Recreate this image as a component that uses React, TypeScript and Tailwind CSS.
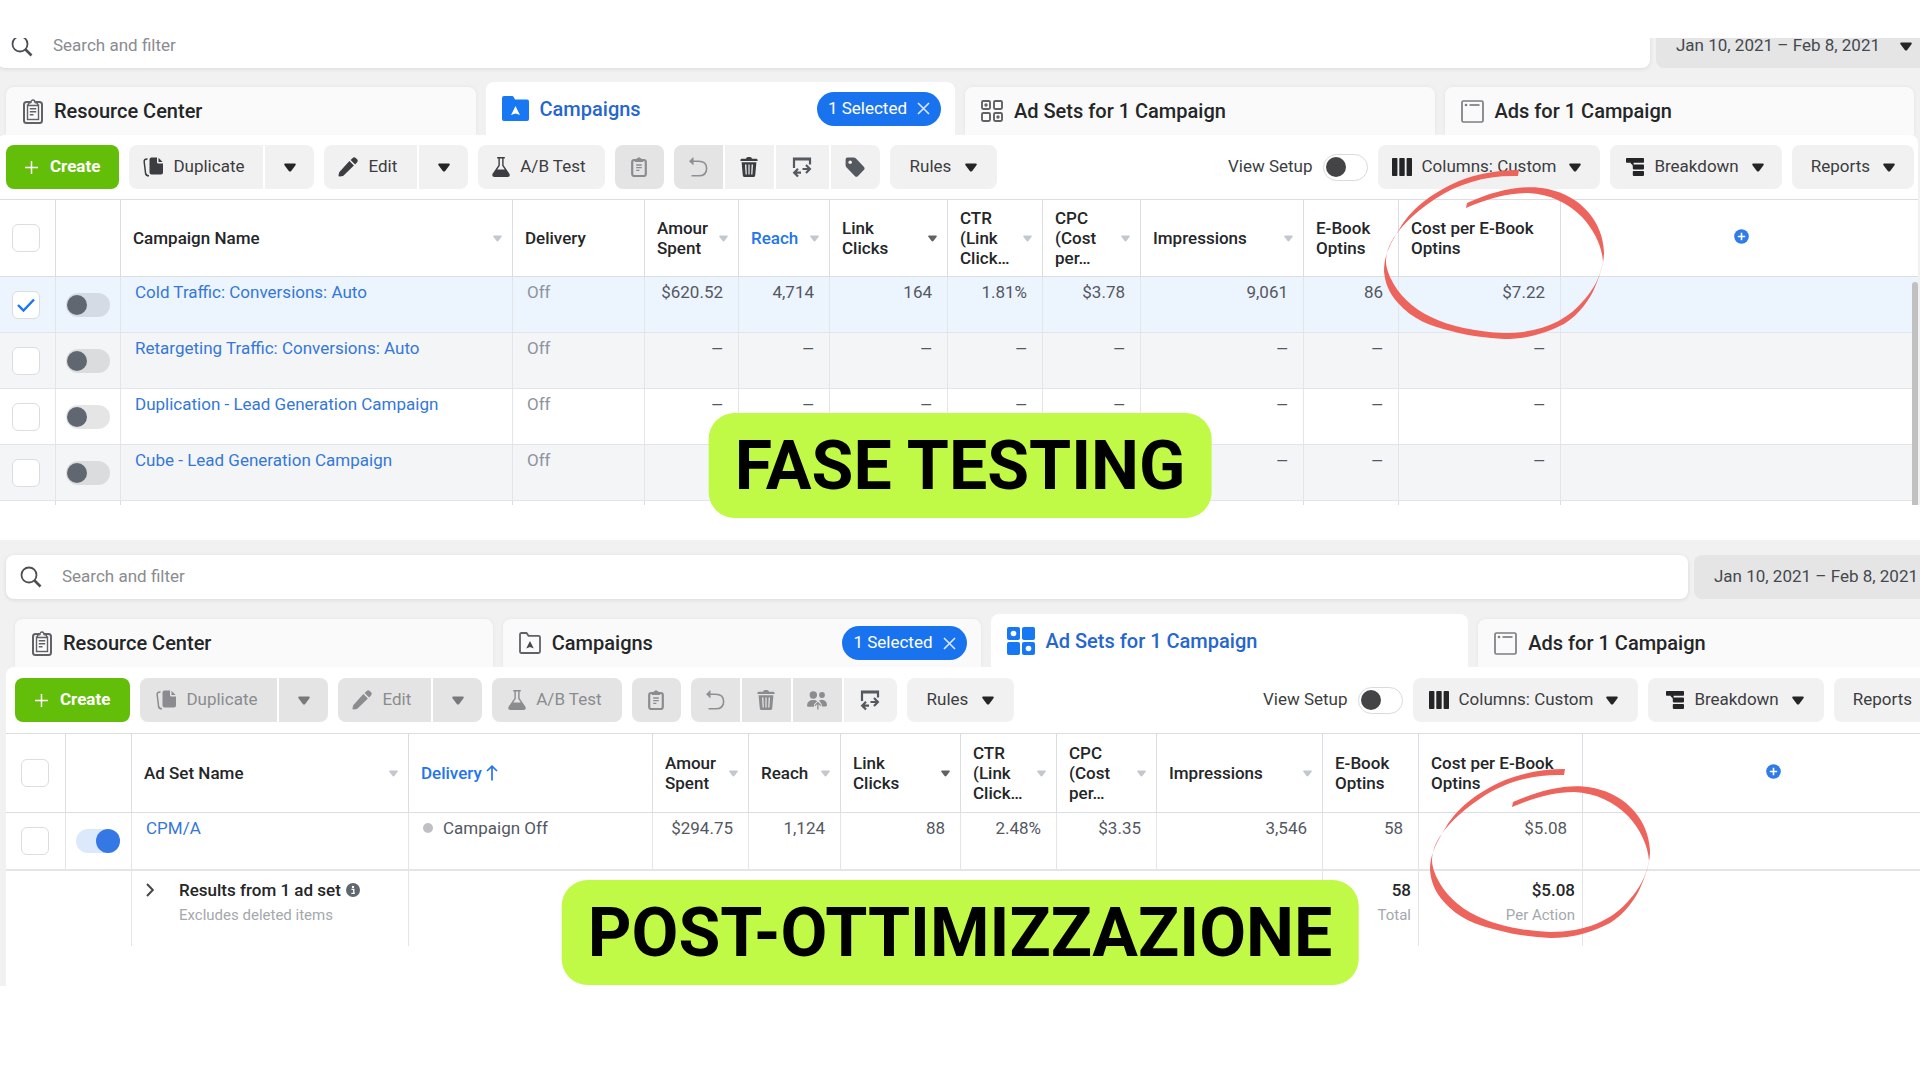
import { clsx } from "clsx";
import type { ReactNode } from "react";

type IconProps = { className?: string };

/* ---------- Icons ---------- */

const SearchIcon = () => (
  <svg viewBox="0 0 22 22" className="w-[22px] h-[22px] shrink-0" fill="none" stroke="#4b4f56" strokeWidth="1.8">
    <circle cx="9" cy="9" r="7.5" />
    <path d="M14.5 14.5 L20.5 20.5" strokeWidth="2.6" />
  </svg>
);

const Caret = ({ className }: IconProps) => (
  <svg viewBox="0 0 12 9" className={clsx("shrink-0", className)} fill="currentColor">
    <path d="M1.2 0.5 H10.8 Q12.3 0.8 11.5 2.3 L7.2 7.9 Q6 9.2 4.8 7.9 L0.5 2.3 Q-0.3 0.8 1.2 0.5 Z" />
  </svg>
);

const ClipboardIcon = () => (
  <svg viewBox="0 0 20 25" className="w-5 h-[25px] ml-px shrink-0" fill="none" stroke="#606266">
    <rect x="1" y="3" width="18" height="21" rx="2.5" strokeWidth="2" />
    <rect x="4.5" y="6" width="11" height="14.5" strokeWidth="1.4" />
    <path d="M5.5 6.5 V4.5 L8 3.5 Q8 1 10 1 Q12 1 12 3.5 L14.5 4.5 V6.5 Z" strokeWidth="1.3" fill="#f6f6f6" />
    <path d="M6.8 9.8 H13.2 M6.8 12.8 H13.2 M6.8 15.8 H10.5" strokeWidth="1.4" />
  </svg>
);

const PasteIcon = () => (
  <svg viewBox="0 0 16 20" className="w-4 h-5" fill="none" stroke="currentColor">
    <rect x="1.2" y="3" width="13.6" height="16" rx="2" strokeWidth="2.2" />
    <path d="M4 4.5 V3 L6 2 Q8 -0.6 10 2 L12 3 V4.5 Z" fill="currentColor" strokeWidth="1" />
    <path d="M5.2 8 H10.8 M5.2 10.7 H10.8 M5.2 13.4 H8.4" strokeWidth="1.3" />
  </svg>
);

const FolderIcon = ({ active }: { active?: boolean }) =>
  active ? (
    <svg viewBox="0 0 27 25" className="w-[27px] h-[25px] shrink-0">
      <path d="M2 0 H10 Q11.2 0 11.8 1.2 L13 3.4 H25 Q27 3.4 27 5.4 V23 Q27 25 25 25 H2 Q0 25 0 23 V2 Q0 0 2 0 Z" fill="#1877f2" />
      <path d="M13.5 10 L18 19 L13.5 17.4 L9 19 Z" fill="#fff" />
    </svg>
  ) : (
    <svg viewBox="0 0 22 22" className="w-[22px] h-[22px] shrink-0" fill="none" stroke="#606266" strokeWidth="1.8">
      <path d="M2.5 1 H7.5 L9.5 3.8 H19.5 Q21 3.8 21 5.3 V19.5 Q21 21 19.5 21 H2.5 Q1 21 1 19.5 V2.5 Q1 1 2.5 1 Z" />
      <path d="M11 9 L14.8 16.5 L11 15 L7.2 16.5 Z" fill="#444950" stroke="none" />
    </svg>
  );

const GridIcon = ({ active }: { active?: boolean }) =>
  active ? (
    <svg viewBox="0 0 28 28" className="w-[28px] h-[28px] shrink-0" fill="#1877f2">
      <rect x="0" y="0" width="13" height="13" rx="2" />
      <rect x="15" y="0" width="13" height="13" rx="2" />
      <rect x="0" y="15" width="13" height="13" rx="2" />
      <rect x="15" y="15" width="13" height="13" rx="2" />
      <circle cx="6.5" cy="6.5" r="2.8" fill="#fff" />
      <circle cx="21.5" cy="21.5" r="2.8" fill="#fff" />
    </svg>
  ) : (
    <svg viewBox="0 0 22 22" className="w-[22px] h-[22px] shrink-0" fill="none" stroke="#606266" strokeWidth="1.9">
      <rect x="1" y="1" width="8" height="8" rx="1.2" />
      <rect x="13" y="1" width="8" height="8" rx="1.2" />
      <rect x="1" y="13" width="8" height="8" rx="1.2" />
      <rect x="13" y="13" width="8" height="8" rx="1.2" />
      <circle cx="5" cy="5" r="1.7" fill="#606266" stroke="none" />
      <circle cx="17" cy="17" r="1.7" fill="#606266" stroke="none" />
    </svg>
  );

const WindowIcon = () => (
  <svg viewBox="0 0 23 23" className="w-[23px] h-[23px] shrink-0" fill="none" stroke="#7b7d80" strokeWidth="1.7">
    <rect x="1" y="1" width="21" height="21" rx="1.5" />
    <path d="M8.5 5 H18.5" />
    <circle cx="5" cy="5" r="1.3" fill="#7b7d80" stroke="none" />
  </svg>
);

const PlusIcon = () => (
  <svg viewBox="0 0 13 13" className="w-[13px] h-[13px]" stroke="#fff" strokeWidth="1.5">
    <path d="M6.5 0 V13 M0 6.5 H13" />
  </svg>
);

const DuplicateIcon = () => (
  <svg viewBox="0 0 20 20" className="w-5 h-5" fill="currentColor">
    <path d="M8.5 0.5 H14 V5 Q14 6.5 15.5 6.5 H20 V15.5 Q20 17.5 18 17.5 H8.5 Q6.5 17.5 6.5 15.5 V2.5 Q6.5 0.5 8.5 0.5 Z" />
    <path d="M15.5 0.8 L19.6 5 H15.5 Z" />
    <path d="M4.5 2 Q0.8 1.8 1.2 5 L2.6 16.5 Q3 18.8 6 18.8" fill="none" stroke="currentColor" strokeWidth="1.5" />
  </svg>
);

const PencilIcon = () => (
  <svg viewBox="0 0 20 20" className="w-5 h-5" fill="currentColor">
    <path d="M1.2 15.2 L11.4 4.1 L15.9 8.6 L5.1 19 L1.6 19.6 Q0.2 19.6 0.5 18.3 Z" />
    <path d="M12.6 2.9 L14.7 0.9 Q16.2 -0.3 17.7 0.9 L19.1 2.3 Q20.4 3.8 19.1 5.3 L17.1 7.4 Z" />
  </svg>
);

const FlaskIcon = () => (
  <svg viewBox="0 0 18 20" className="w-[18px] h-5" fill="currentColor">
    <path d="M5.2 0 H12.8 V1.6 H11.6 V8.3 L17.4 16.8 Q18.6 19.8 15.6 20 H2.4 Q-0.6 19.8 0.6 16.8 L6.4 8.3 V1.6 H5.2 Z M7.8 1.6 V8.8 L5.2 12.6 H12.8 L10.2 8.8 V1.6 Z" fillRule="evenodd" />
  </svg>
);

const UndoIcon = () => (
  <svg viewBox="0 0 20 20" className="w-5 h-5" fill="none" stroke="#8d8f92" strokeWidth="1.6">
    <path d="M2 4.2 H10.5 Q18.6 4.2 18.6 11.4 Q18.6 18.8 10.5 18.8 H3.5" />
    <path d="M5.2 0.6 L1.4 4.2 L5.2 7.8 Z" fill="#8d8f92" strokeWidth="0.6" />
  </svg>
);

const TrashIcon = () => (
  <svg viewBox="0 0 18 20" className="w-[18px] h-5" fill="currentColor">
    <path d="M6 1.8 Q6.3 0 8 0 H10 Q11.7 0 12 1.8 H16.5 Q17.6 2 17.6 3.2 V4 H0.4 V3.2 Q0.4 2 1.5 1.8 Z" />
    <path d="M1.6 5.2 H16.4 L15.2 18.4 Q15 20 13.4 20 H4.6 Q3 20 2.8 18.4 Z M5 7.6 L5.6 17.6 H6.8 L6.4 7.6 Z M8.4 7.6 V17.6 H9.6 V7.6 Z M11.6 7.6 L11.2 17.6 H12.4 L13 7.6 Z" fillRule="evenodd" />
  </svg>
);

const PeopleIcon = () => (
  <svg viewBox="0 0 20 20" className="w-5 h-5" fill="currentColor">
    <circle cx="6.3" cy="5" r="3.7" />
    <circle cx="15" cy="5" r="2.9" />
    <path d="M0 15.5 Q0.4 10 6.3 10 Q9 10 10.2 11.2 L7 14.2 V16.8 H0.8 Q0 16.6 0 15.5 Z" />
    <path d="M12 10.6 Q13.4 9.8 15 9.8 Q19.6 10 20 15 Q20 16.4 18.8 16.6 H15 L14.8 14.4 Z" />
    <path d="M7.9 15.6 L10.9 12.6 L13.9 15.6 M10.9 13 V19.5" fill="none" stroke="currentColor" strokeWidth="1.3" />
  </svg>
);

const SwapIcon = () => (
  <svg viewBox="0 0 20 21" className="w-5 h-[21px]" fill="none" stroke="#54585f" strokeWidth="2.2">
    <path d="M2 11 V1.6 H18 V7.5" />
    <path d="M1 2.8 H19" strokeWidth="1.4" />
    <path d="M2.5 15.7 H9 M6 11.8 L2.2 15.7 L6 19.6 M10.5 12 H17.5 M14 8 L17.9 12 L14 16" strokeWidth="2.2" />
  </svg>
);

const TagIcon = () => (
  <svg viewBox="0 0 20 20" className="w-5 h-5">
    <path d="M2.5 0.5 H8.5 Q10 0.5 11 1.6 L19 10 Q20.2 11.4 19 12.8 L12.8 19.2 Q11.4 20.4 10 19.2 L1.6 10.6 Q0.6 9.6 0.6 8.2 V2.4 Q0.6 0.6 2.5 0.5 Z" fill="#54585f" />
    <circle cx="5.2" cy="5.2" r="1.8" fill="#f0f0f0" />
  </svg>
);

const ColumnsIcon = () => (
  <svg viewBox="0 0 20 18" className="w-5 h-[18px]" fill="#242526">
    <rect x="0" y="0" width="5.4" height="18" rx="0.8" />
    <rect x="7.3" y="0" width="5.4" height="18" rx="0.8" />
    <rect x="14.6" y="0" width="5.4" height="18" rx="0.8" />
  </svg>
);

const BreakdownIcon = () => (
  <svg viewBox="0 0 18 18" className="w-[18px] h-[18px]" fill="#242526">
    <rect x="0" y="0" width="18" height="4.8" rx="0.8" />
    <rect x="6.8" y="6.4" width="11.2" height="5" rx="0.8" />
    <rect x="6.8" y="12.9" width="11.2" height="5" rx="0.8" />
    <path d="M4.8 4 H7.6 V8 L4.8 5.6 Z" />
  </svg>
);

const AddColumnIcon = () => (
  <svg viewBox="0 0 15 15" className="w-[15px] h-[15px]">
    <circle cx="7.5" cy="7.5" r="7.3" fill="#2f7be8" />
    <path d="M7.5 3.8 V11.2 M3.8 7.5 H11.2" stroke="#fff" strokeWidth="1.6" />
  </svg>
);

const InfoIcon = () => (
  <svg viewBox="0 0 14 14" className="w-[14px] h-[14px]">
    <circle cx="7" cy="7" r="7" fill="#606770" />
    <circle cx="7" cy="3.9" r="1.2" fill="#fff" />
    <path d="M5.5 6.3 H7.8 V10.2 M5.4 10.4 H8.8" stroke="#fff" strokeWidth="1.3" fill="none" />
  </svg>
);

const HandCircle = ({ className }: IconProps) => (
  <svg viewBox="0 0 220 170" className={clsx("absolute w-[220px] h-[170px] pointer-events-none", className)} fill="#ed645d">
    <path d="M135 0 C112 0 93 4 75 11 C45 24 26 41 16 58 C4 77 0 88 0 101 C1 113 5 123 14 133 C28 149 46 156 67 161 C85 166 103 168 120 169 C144 169 162 163 180 154 C196 144 206 129 211 117 C217 103 220 92 220 82 C219 66 214 54 205 43 C194 30 181 23 164 19 C140 14 112 20 83 33 L82 38 C103 29 124 23 144 23 C166 24 184 33 198 47 C210 60 218 76 219 92 C216 108 209 120 200 130 C182 152 155 163 120 163 C92 162 65 156 47 147 C28 138 14 124 7 109 C2 98 1 92 3 83 C8 63 30 43 51 29 C75 13 103 5 134 6 Z" />
  </svg>
);

/* ---------- Controls ---------- */

type BtnProps = {
  children: ReactNode;
  label?: string;
  disabled?: boolean;
  className?: string;
};

const Btn = ({ children, label, disabled, className }: BtnProps) => (
  <button
    aria-label={label}
    disabled={disabled}
    className={clsx(
      "h-11 flex items-center justify-center gap-2.5 whitespace-nowrap shrink-0",
      disabled ? "bg-[#e4e4e4] text-[#8a8c8f]" : "bg-[#f1f1f1] text-[#3b3d40]",
      className
    )}
  >
    {children}
  </button>
);

const CheckBox = ({ label, checked }: { label: string; checked?: boolean }) => (
  <span className="relative inline-block align-middle w-7 h-7">
    <input
      type="checkbox"
      aria-label={label}
      defaultChecked={checked}
      className="peer appearance-none block w-7 h-7 rounded-md border border-[#dadde1] bg-white"
    />
    <svg viewBox="0 0 28 28" className="absolute inset-0 w-7 h-7 hidden peer-checked:block pointer-events-none" fill="none" stroke="#1877f2" strokeWidth="2.4">
      <path d="M6 14 L11.5 19.5 L22 8.5" />
    </svg>
  </span>
);

const Toggle = ({ label, checked }: { label: string; checked?: boolean }) => (
  <input
    type="checkbox"
    role="switch"
    aria-label={label}
    defaultChecked={checked}
    className="appearance-none inline-flex items-center align-middle w-11 h-6 rounded-full bg-black/10 before:content-[''] before:w-5 before:h-5 before:ml-px before:rounded-full before:bg-[#606770] checked:bg-[#dce9fc] checked:before:w-6 checked:before:h-6 checked:before:ml-auto checked:before:bg-[#3578e5]"
  />
);

/* ---------- Panel sections ---------- */

type TabData = { id: string; title: string; icon: ReactNode; active?: boolean; selected?: boolean };

const Tab = ({ title, icon, active, selected }: TabData) => (
  <div
    className={clsx(
      "flex-1 flex items-center justify-between pl-4 pr-3.5 rounded-t-lg",
      active ? "h-[53px] bg-white" : "h-12 bg-[#fafafa] shadow-[0_0_4px_rgba(0,0,0,0.06)]"
    )}
  >
    <a
      href="#"
      className={clsx("flex items-center gap-[11px] text-[20px] font-medium whitespace-nowrap", active ? "text-[#2566d0]" : "text-[#242628]")}
    >
      {icon}
      {title}
    </a>
    {selected && (
      <button className="flex items-center gap-2.5 h-[34px] px-[11px] rounded-full bg-[#1a73ee] text-white text-[17px] whitespace-nowrap">
        1 Selected
        <svg viewBox="0 0 13 13" className="w-[13px] h-[13px]" stroke="#dbe8fd" strokeWidth="1.6">
          <path d="M1 1 L12 12 M12 1 L1 12" />
        </svg>
      </button>
    )}
  </div>
);

const Toolbar = ({ id, adSets }: { id: string; adSets?: boolean }) => {
  const pad = adSets ? "pl-4 pr-5" : "pl-3.5 pr-[19px]";
  const caretColor = adSets ? "text-[#77797c]" : "text-[#242526]";

  return (
    <div className={clsx("flex items-center gap-2.5 pl-[9px] pr-1 text-[17px]", adSets ? "py-[11px]" : "py-2.5")}>
      <button
        className={clsx(
          "h-11 flex items-center gap-3 rounded-lg bg-[#63be09] text-white font-bold shrink-0",
          adSets ? "px-5" : "px-[19px]"
        )}
      >
        <PlusIcon />
        Create
      </button>
      <div className="flex gap-[2px]">
        <Btn disabled={adSets} className={clsx("rounded-l-lg", pad)}>
          <DuplicateIcon />
          Duplicate
        </Btn>
        <Btn disabled={adSets} label="Duplicate options" className="w-[49px] rounded-r-lg">
          <Caret className={clsx("w-3 h-[9px]", caretColor)} />
        </Btn>
      </div>
      <div className="flex gap-[2px]">
        <Btn disabled={adSets} className="pl-3.5 pr-5 rounded-l-lg">
          <PencilIcon />
          Edit
        </Btn>
        <Btn disabled={adSets} label="Edit options" className="w-[49px] rounded-r-lg">
          <Caret className={clsx("w-3 h-[9px]", caretColor)} />
        </Btn>
      </div>
      <Btn disabled={adSets} className={clsx("rounded-lg", pad)}>
        <FlaskIcon />
        A/B Test
      </Btn>
      <Btn disabled label="Paste" className="w-[49px] rounded-lg">
        <PasteIcon />
      </Btn>
      <div className="flex gap-[2px]">
        <Btn disabled label="Undo" className="w-[49px] rounded-l-lg">
          <UndoIcon />
        </Btn>
        <Btn disabled={adSets} label="Delete" className="w-[49px]">
          <TrashIcon />
        </Btn>
        {adSets && (
          <Btn disabled label="Audience" className="w-[49px]">
            <PeopleIcon />
          </Btn>
        )}
        <Btn label="Export and import" className={clsx("w-[53px]", adSets && "rounded-r-lg")}>
          <SwapIcon />
        </Btn>
        {!adSets && (
          <Btn label="Tags" className="w-[49px] rounded-r-lg">
            <TagIcon />
          </Btn>
        )}
      </div>
      <Btn className="px-5 rounded-lg">
        Rules
        <Caret className="w-3 h-[9px] ml-1 text-[#242526]" />
      </Btn>
      <div className="ml-auto flex items-center gap-2.5">
        <label htmlFor={`${id}-setup`} className="text-[#3b3d40] whitespace-nowrap">
          View Setup
        </label>
        <input
          id={`${id}-setup`}
          type="checkbox"
          role="switch"
          className="appearance-none flex items-center w-[45px] h-[27px] rounded-full border border-[#dadada] bg-white before:content-[''] before:w-5 before:h-5 before:ml-[2px] before:rounded-full before:bg-[#444446]"
        />
        <Btn className={clsx("rounded-lg", pad)}>
          <ColumnsIcon />
          Columns: Custom
          <Caret className="w-3 h-[9px] ml-[3px] text-[#242526]" />
        </Btn>
        <Btn className={clsx("rounded-lg", adSets ? "pl-[18px] pr-5" : "pl-4 pr-[18px]")}>
          <BreakdownIcon />
          Breakdown
          <Caret className="w-3 h-[9px] ml-[3px] text-[#242526]" />
        </Btn>
        <Btn className="px-[19px] rounded-lg">
          Reports
          <Caret className="w-3 h-[9px] ml-[3px] text-[#242526]" />
        </Btn>
      </div>
    </div>
  );
};

type Column = { title: string; caret?: "light" | "dark"; blue?: boolean; arrow?: boolean };

const HeaderCell = ({ title, caret, blue, arrow }: Column) => (
  <th className="p-0 pl-3 pr-2.5 border-y border-r border-[#dadde1] text-left font-medium">
    <div className={clsx("flex items-center justify-between", blue && "text-[#2374ee]")}>
      <span className="flex items-center gap-1 whitespace-pre">
        {title}
        {arrow && (
          <svg viewBox="0 0 12 16" className="w-3 h-4" fill="none" stroke="#2374ee" strokeWidth="1.7">
            <path d="M6 15.5 V1.5 M1 6 L6 1.2 L11 6" />
          </svg>
        )}
      </span>
      {caret && <Caret className={clsx("w-[9px] h-[7px]", caret === "dark" ? "text-[#606266]" : "text-[#c3c8ce]")} />}
    </div>
  </th>
);

const AddHeader = () => (
  <th className="p-0 pl-[3px] pb-1 border-y border-[#dadde1]">
    <button aria-label="Add column" className="block mx-auto">
      <AddColumnIcon />
    </button>
  </th>
);

const cell = "p-0 pt-[5px] border-b border-r border-[#e3e5e8] align-top";

type PanelProps = {
  id: string;
  className?: string;
  searchClassName?: string;
  tabsClassName?: string;
  tabs: TabData[];
  adSets?: boolean;
  children: ReactNode;
};

const Panel = ({ id, className, searchClassName, tabsClassName, tabs, adSets, children }: PanelProps) => (
  <section className="overflow-hidden bg-[#f1f1f1]">
    <div className={className}>
      <div className={clsx("flex gap-[6px]", searchClassName)}>
        <div className="flex-1 flex items-center gap-5 h-11 pl-3.5 rounded-lg bg-white shadow-[0_1px_4px_rgba(0,0,0,0.1)]">
          <SearchIcon />
          <input
            type="text"
            aria-label="Search and filter"
            placeholder="Search and filter"
            className="flex-1 text-[17px] outline-none placeholder:text-[#8a8c8f]"
          />
        </div>
        <button className="h-11 flex items-center gap-5 px-5 rounded-lg bg-[#e5e5e5] text-[17px] text-[#444950] whitespace-nowrap">
          Jan 10, 2021 – Feb 8, 2021
          <Caret className="w-3 h-[9px] text-[#242526]" />
        </button>
      </div>
      <div className={clsx("flex items-end gap-2.5 pl-[9px] pr-1", tabsClassName)}>
        {tabs.map((tab) => (
          <Tab key={tab.id} {...tab} />
        ))}
      </div>
      <div className="relative rounded-t-lg bg-white">
        <Toolbar id={id} adSets={adSets} />
        {children}
      </div>
    </div>
  </section>
);

/* ---------- Data ---------- */

const campaignColumns: Column[] = [
  { title: "Campaign Name", caret: "light" },
  { title: "Delivery" },
  { title: "Amour\nSpent", caret: "light" },
  { title: "Reach", caret: "light", blue: true },
  { title: "Link\nClicks", caret: "dark" },
  { title: "CTR\n(Link\nClick…", caret: "light" },
  { title: "CPC\n(Cost\nper…", caret: "light" },
  { title: "Impressions", caret: "light" },
  { title: "E-Book\nOptins" },
  { title: "Cost per E-Book\nOptins" },
];

const campaigns = [
  { name: "Cold Traffic: Conversions: Auto", checked: true, values: ["$620.52", "4,714", "164", "1.81%", "$3.78", "9,061", "86", "$7.22"] },
  { name: "Retargeting Traffic: Conversions: Auto", values: ["—", "—", "—", "—", "—", "—", "—", "—"] },
  { name: "Duplication - Lead Generation Campaign", values: ["—", "—", "—", "—", "—", "—", "—", "—"] },
  { name: "Cube - Lead Generation Campaign", values: ["", "", "", "", "", "—", "—", "—"] },
];

const adSetColumns: Column[] = [
  { title: "Ad Set Name", caret: "light" },
  { title: "Delivery", blue: true, arrow: true },
  ...campaignColumns.slice(2).map((column) => ({ ...column, blue: false })),
];

const adSetValues = ["$294.75", "1,124", "88", "2.48%", "$3.35", "3,546", "58", "$5.08"];

const adSetTotals = [
  { value: "58", note: "Total" },
  { value: "$5.08", note: "Per Action" },
];

const campaignTabs: TabData[] = [
  { id: "resources", title: "Resource Center", icon: <ClipboardIcon /> },
  { id: "campaigns", title: "Campaigns", icon: <FolderIcon active />, active: true, selected: true },
  { id: "adsets", title: "Ad Sets for 1 Campaign", icon: <GridIcon /> },
  { id: "ads", title: "Ads for 1 Campaign", icon: <WindowIcon /> },
];

const adSetTabs: TabData[] = [
  { id: "resources", title: "Resource Center", icon: <ClipboardIcon /> },
  { id: "campaigns", title: "Campaigns", icon: <FolderIcon />, selected: true },
  { id: "adsets", title: "Ad Sets for 1 Campaign", icon: <GridIcon active />, active: true },
  { id: "ads", title: "Ads for 1 Campaign", icon: <WindowIcon /> },
];

const campaignWidths = ["w-[59px]", "w-[65px]", "w-[392px]", "w-[132px]", "w-[94px]", "w-[91px]", "w-[118px]", "w-[95px]", "w-[98px]", "w-[163px]", "w-[95px]", "w-[162px]", ""];
const adSetWidths = ["w-[60px]", "w-[66px]", "w-[277px]", "w-[244px]", "w-24", "w-[92px]", "w-[120px]", "w-24", "w-[100px]", "w-[166px]", "w-24", "w-[164px]", ""];

const Cols = ({ widths }: { widths: string[] }) => (
  <colgroup>
    {widths.map((width, i) => (
      <col key={i} className={width} />
    ))}
  </colgroup>
);

const CampaignTable = () => (
  <>
    <table className="w-full table-fixed border-separate border-spacing-0 text-[17px] leading-5 text-[#54585f]">
      <Cols widths={campaignWidths} />
      <thead className="text-[#242628]">
        <tr className="h-[78px]">
          <th className="p-0 pl-[15px] text-left border-y border-r border-[#dadde1]">
            <CheckBox label="Select all campaigns" />
          </th>
          <th className="border-y border-r border-[#dadde1]" />
          {campaignColumns.map((column) => (
            <HeaderCell key={column.title} {...column} />
          ))}
          <AddHeader />
        </tr>
      </thead>
      <tbody>
        {campaigns.map(({ name, checked, values }, row) => (
          <tr key={name} className={clsx("h-14", checked ? "bg-[#ecf4fe]" : row % 2 === 1 ? "bg-[#f4f5f7]" : "bg-white")}>
            <td className="p-0 pl-[15px] border-b border-r border-[#e3e5e8]">
              <CheckBox label={`Select ${name}`} checked={checked} />
            </td>
            <td className="p-0 pl-2.5 border-b border-r border-[#e3e5e8]">
              <Toggle label={`Turn on ${name}`} />
            </td>
            <td className={clsx(cell, "pl-3.5")}>
              <a href="#" className="text-[#3578d8]">{name}</a>
            </td>
            <td className={clsx(cell, "pl-3.5 text-[#8d949e]")}>Off</td>
            {values.map((value, i) => (
              <td key={i} className={clsx(cell, "pr-[15px] text-right")}>
                {value === "—" ? <span className="text-[15px]">{value}</span> : value}
              </td>
            ))}
            <td className="border-b border-[#e3e5e8]" />
          </tr>
        ))}
        <tr className="h-1">
          {campaignWidths.map((_, i) => (
            <td key={i} className={clsx("p-0", i < 12 && "border-r border-[#dadde1]")} />
          ))}
        </tr>
      </tbody>
    </table>
    <div className="absolute right-0 bottom-0 w-1.5 h-[223px] rounded-t-full bg-[#c1c1c1]" />
  </>
);

const AdSetTable = () => (
  <div className="pb-10">
    <table className="w-full table-fixed border-separate border-spacing-0 text-[17px] leading-5 text-[#54585f]">
      <Cols widths={adSetWidths} />
      <thead className="text-[#242628]">
        <tr className="h-20">
          <th className="p-0 pl-[15px] text-left border-y border-r border-[#dadde1]">
            <CheckBox label="Select all ad sets" />
          </th>
          <th className="border-y border-r border-[#dadde1]" />
          {adSetColumns.map((column) => (
            <HeaderCell key={column.title} {...column} />
          ))}
          <AddHeader />
        </tr>
      </thead>
      <tbody>
        <tr className="h-[58px]">
          <td className="p-0 pl-[15px] border-b-2 border-r border-[#e3e5e8]">
            <CheckBox label="Select CPM/A" />
          </td>
          <td className="p-0 pl-2.5 border-b-2 border-r border-[#e3e5e8]">
            <Toggle label="Turn on CPM/A" checked />
          </td>
          <td className={clsx(cell, "border-b-2 pl-3.5")}>
            <a href="#" className="text-[#3578d8]">CPM/A</a>
          </td>
          <td className={clsx(cell, "border-b-2 pl-3.5")}>
            <span className="flex items-center gap-2.5">
              <span className="w-2.5 h-2.5 rounded-full bg-[#bec0c3]" />
              Campaign Off
            </span>
          </td>
          {adSetValues.map((value) => (
            <td key={value} className={clsx(cell, "border-b-2 pr-[15px] text-right")}>{value}</td>
          ))}
          <td className="border-b-2 border-[#e3e5e8]" />
        </tr>
        <tr className="h-[75px]">
          <td colSpan={2} className="border-r border-[#e3e5e8]" />
          <td className="p-0 pt-[9px] pl-3.5 border-r border-[#e3e5e8] align-top">
            <div className="flex gap-[25px]">
              <button aria-label="Expand results" className="flex h-5 items-center">
                <svg viewBox="0 0 8 14" className="w-2 h-3.5" fill="none" stroke="#444950" strokeWidth="2">
                  <path d="M1 1 L6.8 7 L1 13" />
                </svg>
              </button>
              <div className="whitespace-nowrap">
                <div className="flex items-center gap-[5px] font-medium text-[#242628]">
                  Results from 1 ad set <InfoIcon />
                </div>
                <div className="mt-[5px] text-[15px] text-[#a5a8ac]">Excludes deleted items</div>
              </div>
            </div>
          </td>
          <td colSpan={7} className="border-r border-[#e3e5e8]" />
          {adSetTotals.map(({ value, note }) => (
            <td key={note} className="p-0 pt-[9px] pr-[7px] border-r border-[#e3e5e8] align-top text-right">
              <div className="font-medium text-[#242628]">{value}</div>
              <div className="mt-[5px] text-[15px] text-[#a5a8ac]">{note}</div>
            </td>
          ))}
          <td />
        </tr>
      </tbody>
    </table>
  </div>
);

const Banner = ({ children, className }: { children: ReactNode; className?: string }) => (
  <h2
    className={clsx(
      "absolute left-1/2 -translate-x-1/2 px-[26px] h-[105px] flex items-center rounded-[26px] bg-[#c0f946] text-black text-[68px] font-bold whitespace-nowrap",
      className
    )}
  >
    {children}
  </h2>
);

export default function App() {
  return (
    <main className="flex flex-col gap-[35px] pt-[38px] bg-white overflow-hidden font-[Roboto,sans-serif]">
      <div className="relative">
        <Panel id="campaigns" className="-ml-[3px] mr-[2px]" searchClassName="-mt-3.5 -mr-3.5" tabsClassName="pt-3.5" tabs={campaignTabs}>
          <CampaignTable />
        </Panel>
        <HandCircle className="left-[1384px] top-[132px]" />
        <Banner className="-bottom-[13px]">FASE TESTING</Banner>
      </div>
      <div className="relative">
        <Panel id="adsets" className="ml-[6px] -mr-10" searchClassName="pt-[15px] -mr-2.5" tabsClassName="pt-[15px]" tabs={adSetTabs} adSets>
          <AdSetTable />
        </Panel>
        <HandCircle className="left-[1430px] top-[229px]" />
        <Banner className="bottom-[1px]">POST-OTTIMIZZAZIONE</Banner>
      </div>
    </main>
  );
}
